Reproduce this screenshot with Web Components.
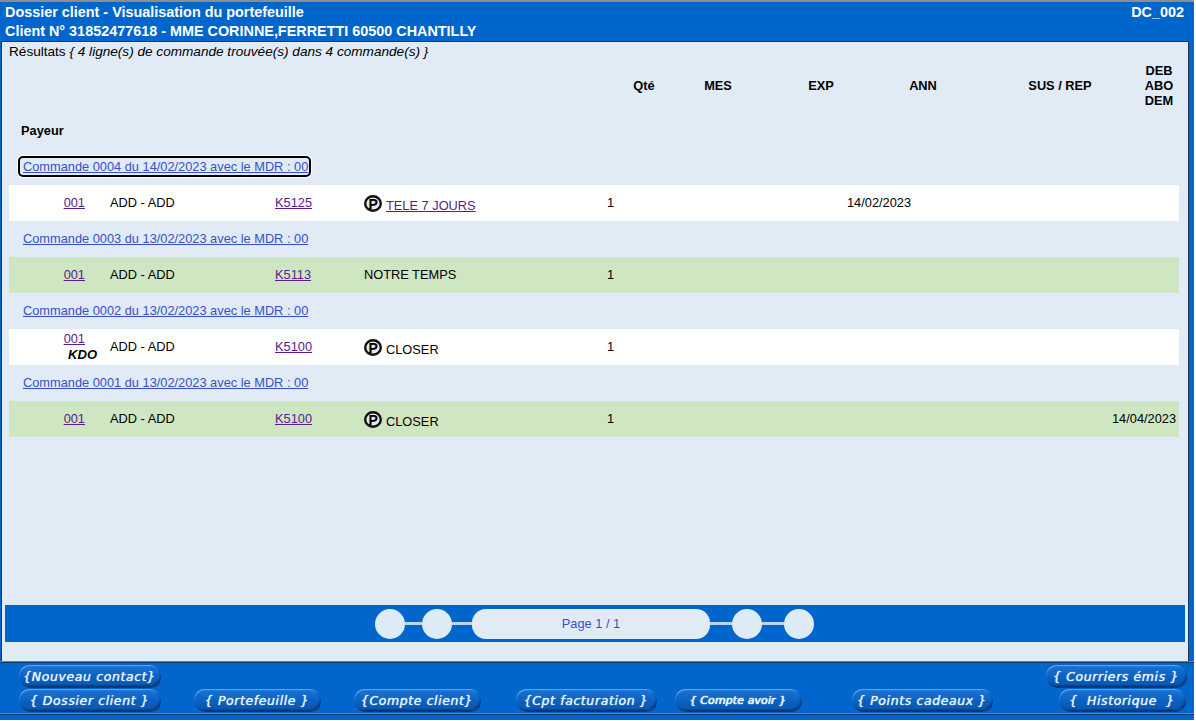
<!DOCTYPE html>
<html lang="fr">
<head>
<meta charset="utf-8">
<title>Dossier client</title>
<style>
  html, body { margin: 0; padding: 0; background: #fff; }
  body { font: 12.8px "Liberation Sans", Arial, sans-serif; color: #000; }
</style>
</head>
<body>
<dossier-app>
  <page-header slot="header" code="DC_002">
    <span>Dossier client - Visualisation du portefeuille</span>
    <span>Client N° 31852477618 - MME CORINNE,FERRETTI 60500 CHANTILLY</span>
  </page-header>

  <result-head slot="panel"></result-head>

  <order-link slot="panel" focused>Commande 0004 du 14/02/2023 avec le MDR : 00</order-link>
  <order-row slot="panel" num="001" ref="K5125" title="TELE 7 JOURS" premium linked date="14/02/2023"></order-row>
  <order-link slot="panel">Commande 0003 du 13/02/2023 avec le MDR : 00</order-link>
  <order-row slot="panel" num="001" ref="K5113" title="NOTRE TEMPS" green></order-row>
  <order-link slot="panel">Commande 0002 du 13/02/2023 avec le MDR : 00</order-link>
  <order-row slot="panel" num="001" ref="K5100" title="CLOSER" premium kdo></order-row>
  <order-link slot="panel">Commande 0001 du 13/02/2023 avec le MDR : 00</order-link>
  <order-row slot="panel" num="001" ref="K5100" title="CLOSER" premium green end="14/04/2023"></order-row>

  <pager-bar slot="pager">Page 1 / 1</pager-bar>

  <nav-btn slot="top" w="141" style="margin-left:19px">{Nouveau contact}</nav-btn>
  <nav-btn slot="top" w="140" style="margin-left:auto;margin-right:8px">{ Courriers émis }</nav-btn>

  <nav-btn slot="bottom" w="141" style="margin-left:19px">{ Dossier client }</nav-btn>
  <nav-btn slot="bottom" w="126" style="margin-left:34px">{ Portefeuille }</nav-btn>
  <nav-btn slot="bottom" w="126" style="margin-left:34px">{Compte client}</nav-btn>
  <nav-btn slot="bottom" w="140" style="margin-left:36px">{Cpt facturation }</nav-btn>
  <nav-btn slot="bottom" w="126" small style="margin-left:19px">{ Compte avoir }</nav-btn>
  <nav-btn slot="bottom" w="140" style="margin-left:51px">{ Points cadeaux }</nav-btn>
  <nav-btn slot="bottom" w="126" style="margin-left:67px">{  Historique  }</nav-btn>
</dossier-app>

<script>
const VISITED = '#5b1a8f';
const LINK = '#3a4fc9';

class DossierApp extends HTMLElement {
  constructor() {
    super();
    this.attachShadow({ mode: 'open' });
    this.shadowRoot.innerHTML = `
      <style>
        :host {
          display: flex;
          flex-direction: column;
          width: 1194px;
          height: 720px;
          background: #0066cc;
          box-sizing: border-box;
          border-top: 2px solid #8d8d8d;
        }
        .panel {
          flex: 1;
          display: flex;
          flex-direction: column;
          margin: 0 5px 0 1px;
          background: #e1ebf6;
          border-top: 1px solid #16365c;
          border-left: 1px solid #16365c;
          border-right: 1px solid #16365c;
          min-height: 0;
        }
        .rows { display: flex; flex-direction: column; }
        .pager { margin-top: auto; padding: 0 3px 19px; }
        .foot {
          height: 52px;
          box-sizing: border-box;
          border-top: 1px solid #8a7a68;
          box-shadow: inset 0 1px 0 #123a68;
          padding-top: 3px;
          display: flex;
          flex-direction: column;
          gap: 2px;
        }
        .line { display: flex; height: 22px; }
        .end {
          height: 6px;
          border-top: 1px solid #8a7a68;
          box-shadow: inset 0 1px 0 #123a68;
        }
      </style>
      <slot name="header"></slot>
      <div class="panel">
        <div class="rows"><slot name="panel"></slot></div>
        <div class="pager"><slot name="pager"></slot></div>
      </div>
      <div class="foot">
        <div class="line"><slot name="top"></slot></div>
        <div class="line"><slot name="bottom"></slot></div>
      </div>
      <div class="end"></div>
    `;
  }
}

class PageHeader extends HTMLElement {
  constructor() {
    super();
    this.attachShadow({ mode: 'open' });
    this.shadowRoot.innerHTML = `
      <style>
        :host {
          display: flex;
          justify-content: space-between;
          height: 39px;
          padding: 1px 10px 0 5px;
          box-sizing: border-box;
          color: #fff;
          font: bold 14.4px/19px "Liberation Sans", Arial, sans-serif;
        }
        .title { display: flex; flex-direction: column; }
        ::slotted(span) { display: block; height: 19px; }
      </style>
      <div class="title"><slot></slot></div>
      <div class="code"></div>
    `;
    this.shadowRoot.querySelector('.code').textContent = this.getAttribute('code');
  }
}

class ResultHead extends HTMLElement {
  constructor() {
    super();
    this.attachShadow({ mode: 'open' });
    this.shadowRoot.innerHTML = `
      <style>
        :host {
          display: block;
          font-size: 12.8px;
          color: #000;
        }
        .summary { padding: 2px 0 0 7px; height: 17px; font-size: 13.6px; line-height: 15px; box-sizing: border-box; white-space: nowrap; }
        .cols {
          display: grid;
          grid-template-columns: 30px 118px 88px 116px 158px 40px;
          margin: 4px 0 0 627px;
          height: 45px;
          align-items: center;
          font-weight: bold;
          line-height: 15px;
          text-align: center;
          white-space: nowrap;
        }
        .cols div { display: flex; justify-content: center; text-align: center; }
        .payer { margin: 16px 0 0 19px; height: 25px; font-weight: bold; line-height: 14px; }
      </style>
      <div class="summary">Résultats <i>{ 4 ligne(s) de commande trouvée(s) dans 4 commande(s) }</i></div>
      <div class="cols">
        <div>Qté</div><div>MES</div><div>EXP</div><div>ANN</div><div>SUS / REP</div>
        <div>DEB<br>ABO<br>DEM</div>
      </div>
      <div class="payer">Payeur</div>
    `;
  }
}

class OrderLink extends HTMLElement {
  constructor() {
    super();
    this.attachShadow({ mode: 'open' });
    const focused = this.hasAttribute('focused');
    this.shadowRoot.innerHTML = `
      <style>
        :host {
          display: flex;
          align-items: center;
          height: 36px;
          padding: 0 0 2px 21px;
          box-sizing: border-box;
          font-size: 12.8px;
        }
        a {
          display: block;
          color: ${LINK};
          text-decoration: underline;
          line-height: 17px;
          white-space: nowrap;
          margin-left: -3px;
          padding: 0 1px 0 3px;
        }
        a.on { outline: 2px solid #000; border-radius: 3px; box-shadow: 0 0 0 3px #fff; }
      </style>
      <a href="#" class="${focused ? 'on' : ''}"><slot></slot></a>
    `;
  }
}

class PMark extends HTMLElement {
  constructor() {
    super();
    this.attachShadow({ mode: 'open' });
    this.shadowRoot.innerHTML = `
      <style>
        :host { display: inline-block; width: 18px; height: 17px; }
        svg { display: block; }
        text { font: bold 14px "Liberation Sans", Arial, sans-serif; fill: #000; }
      </style>
      <svg width="18" height="17" viewBox="0 0 18 17">
        <ellipse cx="9" cy="8.5" rx="7.8" ry="7.3" fill="#e8e8e8" stroke="#111" stroke-width="2.4"/>
        <text x="9.2" y="13.5" text-anchor="middle">P</text>
      </svg>
    `;
  }
}

class OrderRow extends HTMLElement {
  constructor() {
    super();
    this.attachShadow({ mode: 'open' });
    const a = n => this.getAttribute(n) || '';
    const has = n => this.hasAttribute(n);
    const title = has('linked') ? `<a href="#">${a('title')}</a>` : a('title');
    this.shadowRoot.innerHTML = `
      <style>
        :host {
          display: grid;
          grid-template-columns: 76px 25px 165px 89px 243px 240px 265px 67px;
          align-items: center;
          height: 36px;
          margin: 0 7px;
          width: 1170px;
          background: ${has('green') ? '#cfe6c3' : '#fff'};
          font-size: 12.8px;
          line-height: 14px;
          white-space: nowrap;
        }
        a { color: ${VISITED}; text-decoration: underline; }
        .num { text-align: right; }
        .kdo {
          display: block;
          margin-top: 2px;
          font: italic bold 13px/14px "Liberation Sans", Arial, sans-serif;
          width: 21px;
          margin-left: auto;
        }
        .kdo span { display: block; margin-right: -12px; text-align: right; }
        .kdo-stack { margin-top: -1px; }
        .title { display: flex; align-items: flex-start; }
        .title.icon { align-items: center; gap: 4px; }
        .title.icon span { padding-top: 5px; }
        .end { padding-right: 3px; text-align: right; }
      </style>
      <div class="num ${has('kdo') ? 'kdo-stack' : ''}">
        <a href="#">${a('num')}</a>
        ${has('kdo') ? '<span class="kdo"><span>KDO</span></span>' : ''}
      </div>
      <div></div>
      <div>ADD - ADD</div>
      <div><a href="#">${a('ref')}</a></div>
      <div class="title ${has('premium') ? 'icon' : ''}">
        ${has('premium') ? '<p-mark></p-mark>' : ''}<span>${title}</span>
      </div>
      <div>1</div>
      <div class="date">${a('date')}</div>
      <div class="end">${a('end')}</div>
    `;
  }
}

class PagerBar extends HTMLElement {
  constructor() {
    super();
    this.attachShadow({ mode: 'open' });
    this.shadowRoot.innerHTML = `
      <style>
        :host {
          display: flex;
          justify-content: center;
          align-items: center;
          height: 37px;
          background: #0066cc;
        }
        .track { display: flex; align-items: center; margin-left: -1px; }
        .dot { width: 30px; height: 30px; border-radius: 50%; background: #dcebf6; flex: none; }
        .bar { height: 3px; background: #bcd4ee; flex: none; }
        .page {
          width: 238px;
          height: 30px;
          border-radius: 14px;
          background: #e1ebf6;
          display: flex;
          align-items: center;
          justify-content: center;
          color: ${LINK};
          font-size: 12.8px;
        }
      </style>
      <div class="track">
        <div class="dot"></div><div class="bar" style="width:17px"></div>
        <div class="dot"></div><div class="bar" style="width:20px"></div>
        <div class="page"><slot></slot></div><div class="bar" style="width:22px"></div>
        <div class="dot"></div><div class="bar" style="width:22px"></div>
        <div class="dot"></div>
      </div>
    `;
  }
}

class NavBtn extends HTMLElement {
  constructor() {
    super();
    this.attachShadow({ mode: 'open' });
    const small = this.hasAttribute('small');
    this.shadowRoot.innerHTML = `
      <style>
        :host {
          display: flex;
          align-items: center;
          justify-content: center;
          flex: none;
          width: ${this.getAttribute('w')}px;
          height: 21px;
          box-sizing: border-box;
          border-radius: 11px;
          background: linear-gradient(#1a74d6, #0a60c0 60%, #0658b2);
          box-shadow:
            inset 1px 2px 1px -1px #6aa8e8,
            inset -1px -2px 1px -1px #0a3f86,
            1px 2px 0 #0a3a78;
          color: #e8f2fc;
          font: italic ${small ? 11 : 12.5}px "DejaVu Sans", Verdana, sans-serif;
          letter-spacing: ${small ? .1 : .6}px;
          text-shadow: 0 0 1px #fff${small ? ', 0 0 1px #fff' : ''};
        }
        .t { white-space: pre; line-height: 21px; padding-top: 1px; }
      </style>
      <span class="t"><slot></slot></span>
    `;
  }
}

customElements.define('p-mark', PMark);
customElements.define('page-header', PageHeader);
customElements.define('result-head', ResultHead);
customElements.define('order-link', OrderLink);
customElements.define('order-row', OrderRow);
customElements.define('pager-bar', PagerBar);
customElements.define('nav-btn', NavBtn);
customElements.define('dossier-app', DossierApp);
</script>
</body>
</html>
